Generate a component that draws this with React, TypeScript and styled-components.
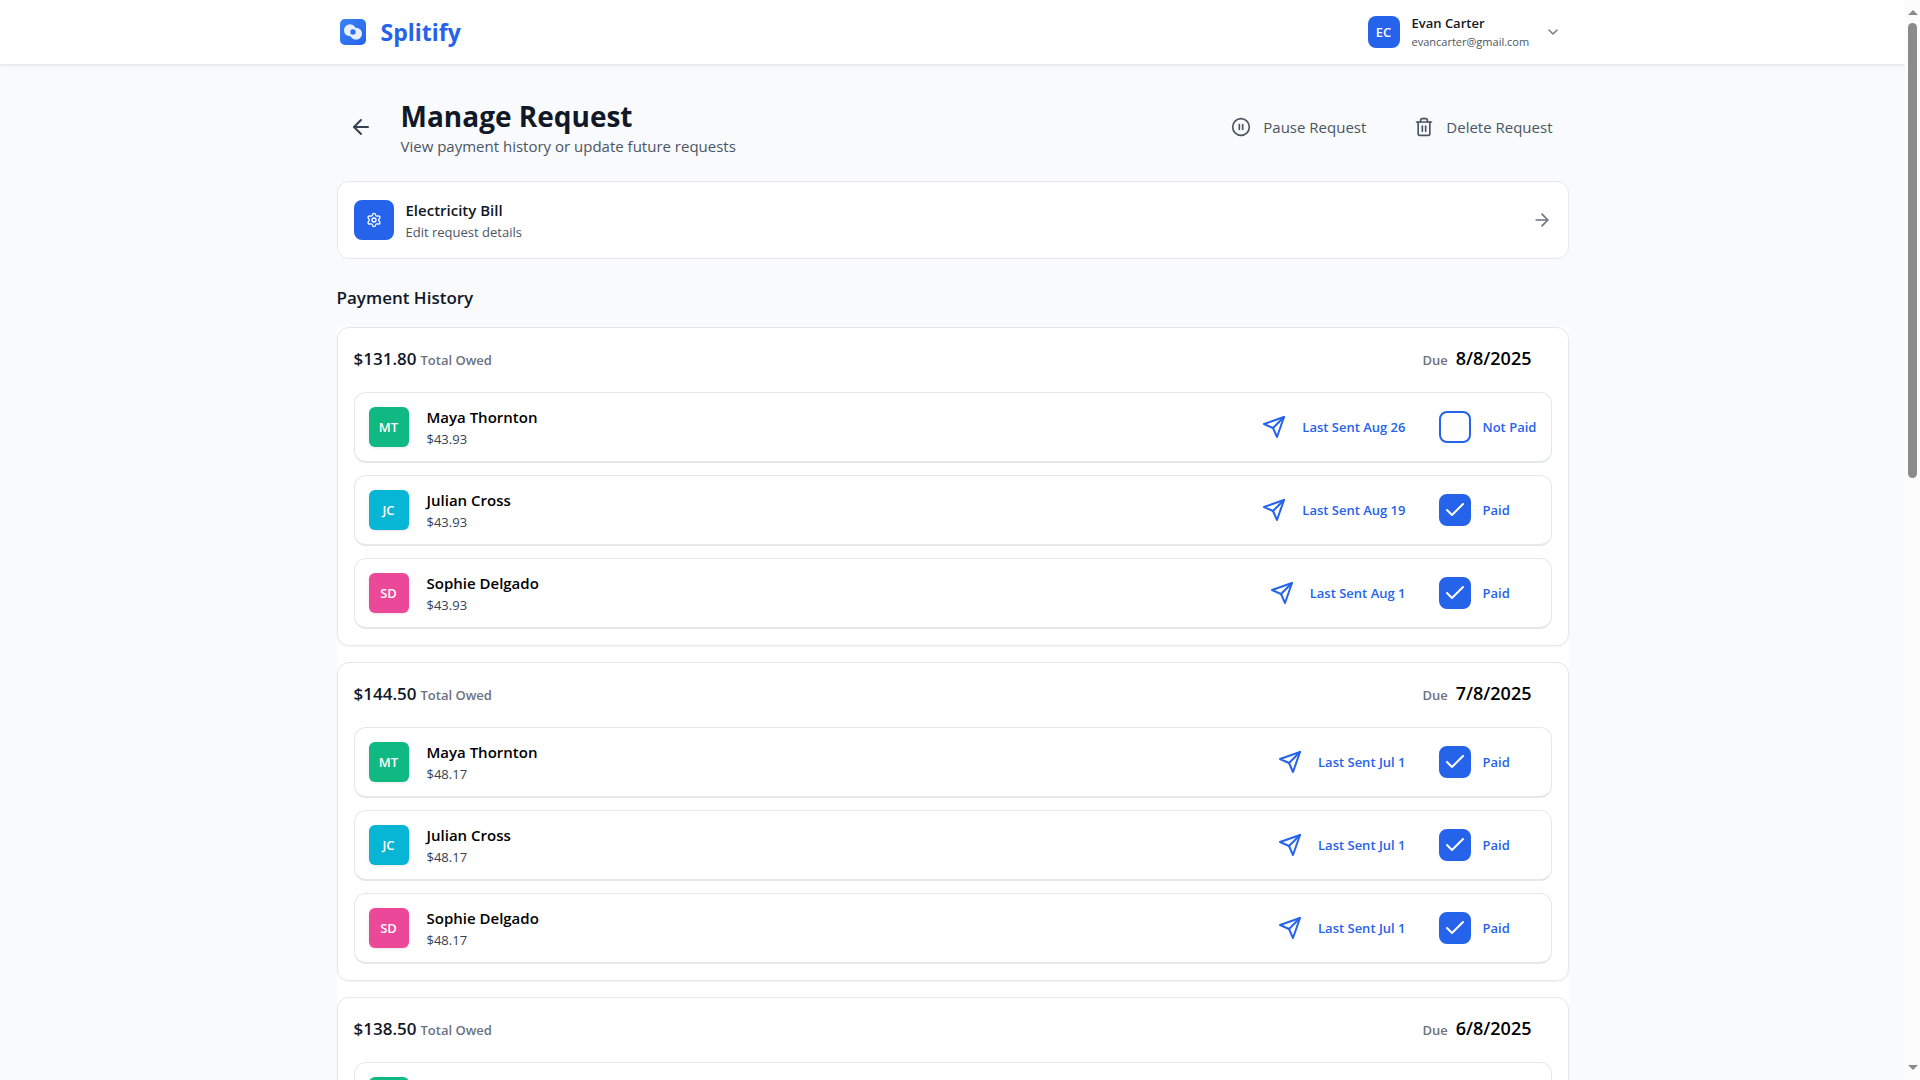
import React, { useState } from "react";
import styled, { createGlobalStyle } from "styled-components";
import {
  ArrowLeft,
  ArrowRight,
  Check,
  ChevronDown,
  CirclePause,
  Settings,
  Trash2,
} from "lucide-react";
import { FiSend } from "react-icons/fi";

const color = {
  page: "#f8fafc",
  surface: "#ffffff",
  line: "#e5e7eb",
  brand: "#2563eb",
  ink: "#111827",
  text: "#374151",
  muted: "#4b5563",
  faint: "#6b7280",
};

const GlobalStyle = createGlobalStyle`
  *, *::before, *::after { box-sizing: border-box; }
  html, body { margin: 0; }
  body {
    background: ${color.page};
    color: ${color.ink};
    font-family: "Segoe UI", "Open Sans", "Noto Sans", sans-serif;
    font-size: 15px;
    line-height: 24px;
  }
  h1, h2, p, ul { margin: 0; padding: 0; }
  ul { list-style: none; }
  button { border: 0; background: none; font: inherit; color: inherit; cursor: pointer; }
  a { color: inherit; text-decoration: none; }
`;

const Window = styled.div`
  display: flex;
  height: 100vh;
`;

const Viewport = styled.div`
  flex: 1;
  min-width: 0;
  overflow-y: auto;
  scrollbar-width: none;
`;

const ScrollRail = styled.div`
  display: flex;
  flex-direction: column;
  align-items: center;
  justify-content: space-between;
  width: 15px;
  padding: 10px 0;
  background: #fcfcfc;
`;

const RailArrow = styled.span<{ $down?: boolean }>`
  border: 0 solid transparent;
  border-left-width: 5px;
  border-right-width: 5px;
  ${(p) => (p.$down ? "border-top: 5px solid #8b8b8b;" : "border-bottom: 5px solid #8b8b8b;")}
`;

const RailTrack = styled.div`
  flex: 1;
  width: 9px;
  margin: 8px 0;
`;

const RailThumb = styled.div`
  height: 44%;
  border-radius: 5px;
  background: #8b8b8b;
`;

const TopBar = styled.header`
  background: ${color.surface};
  box-shadow: 0 1px 3px rgba(15, 23, 42, 0.12);
`;

const Container = styled.div`
  max-width: 1280px;
  margin: 0 auto;
  padding: 0 24px;
`;

const TopBarInner = styled(Container)`
  display: flex;
  align-items: center;
  justify-content: space-between;
  height: 64px;
`;

const Brand = styled.a`
  display: flex;
  align-items: center;
  gap: 12px;
  color: ${color.brand};
  font-size: 23px;
  font-weight: 700;
  line-height: 32px;
`;

const UserMenu = styled.button`
  display: flex;
  align-items: center;
  gap: 12px;
  padding: 8px;
  text-align: left;
`;

const Avatar = styled.span<{ $tone: string; $small?: boolean }>`
  display: flex;
  flex: none;
  align-items: center;
  justify-content: center;
  width: ${(p) => (p.$small ? 32 : 40)}px;
  height: ${(p) => (p.$small ? 32 : 40)}px;
  border-radius: ${(p) => (p.$small ? 8 : 6)}px;
  background: ${(p) => p.$tone};
  box-shadow: ${(p) => (p.$small ? "none" : "0 1px 3px rgba(0, 0, 0, 0.1)")};
  color: #ffffff;
  font-size: 13px;
  font-weight: 600;
`;

const UserText = styled.span`
  display: flex;
  flex-direction: column;
  min-width: 121px;
`;

const UserName = styled.span`
  font-size: 13px;
  font-weight: 600;
  line-height: 20px;
`;

const UserMail = styled.span`
  color: ${color.muted};
  font-size: 11px;
  line-height: 18px;
`;

const Chevron = styled(ChevronDown)`
  color: ${color.faint};
`;

const Main = styled.main`
  padding: 33px 0;
`;

const PageHead = styled.div`
  display: flex;
  align-items: center;
  justify-content: space-between;
  margin-bottom: 24px;
`;

const HeadLeft = styled.div`
  display: flex;
  align-items: center;
  gap: 16px;
`;

const BackButton = styled.button`
  display: flex;
  padding: 12px;
  color: ${color.text};
`;

const Title = styled.h1`
  font-size: 28px;
  font-weight: 700;
  line-height: 38px;
`;

const Subtitle = styled.p`
  color: ${color.muted};
  line-height: 22px;
`;

const HeadActions = styled.div`
  display: flex;
  gap: 16px;
`;

const ActionButton = styled.button`
  display: flex;
  align-items: center;
  gap: 12px;
  padding: 12px 16px;
  color: ${color.muted};
`;

const EditCard = styled.a`
  display: flex;
  align-items: center;
  gap: 12px;
  padding: 16px;
  border: 1px solid ${color.line};
  border-radius: 12px;
  background: ${color.surface};
`;

const EditIcon = styled.span`
  display: flex;
  align-items: center;
  justify-content: center;
  width: 40px;
  height: 40px;
  border-radius: 8px;
  background: ${color.brand};
  color: #ffffff;
`;

const EditText = styled.span`
  display: flex;
  flex: 1;
  flex-direction: column;
`;

const StrongLine = styled.span`
  font-weight: 600;
  line-height: 24px;
`;

const SmallLine = styled.span`
  color: ${color.muted};
  font-size: 13px;
  line-height: 20px;
`;

const EditArrow = styled(ArrowRight)`
  color: ${color.faint};
`;

const SectionTitle = styled.h2`
  margin: 24px 0 14px;
  font-size: 17px;
  font-weight: 600;
  line-height: 30px;
`;

const History = styled.div`
  display: flex;
  flex-direction: column;
  gap: 16px;
  background: ${color.surface};
`;

const PeriodCard = styled.section`
  padding: 16px;
  border: 1px solid ${color.line};
  border-radius: 12px;
  background: ${color.surface};
  box-shadow: 0 1px 2px rgba(0, 0, 0, 0.05);
`;

const PeriodHead = styled.div`
  display: flex;
  align-items: baseline;
  justify-content: space-between;
  height: 28px;
  margin-bottom: 20px;
  padding-right: 20px;
  line-height: 28px;
`;

const HeadPair = styled.div<{ $gap: number }>`
  display: flex;
  align-items: baseline;
  gap: ${(p) => p.$gap}px;
`;

const Amount = styled.span`
  font-size: 17px;
  font-weight: 600;
`;

const DueDate = styled.span`
  color: #000000;
  font-size: 18px;
  font-weight: 600;
`;

const Caption = styled.span`
  color: ${color.faint};
  font-size: 13px;
  font-weight: 600;
`;

const Rows = styled.ul`
  display: flex;
  flex-direction: column;
  gap: 12px;
`;

const Row = styled.li`
  display: flex;
  align-items: center;
  padding: 14px;
  border: 1px solid ${color.line};
  border-bottom-width: 2px;
  border-radius: 12px;
`;

const Person = styled.div`
  display: flex;
  flex: 1;
  flex-direction: column;
  height: 40px;
  margin-left: 18px;
  justify-content: center;
`;

const PersonName = styled.span`
  color: #000000;
  font-weight: 600;
  line-height: 24px;
`;

const PersonAmount = styled.span`
  color: ${color.text};
  font-size: 13px;
  line-height: 20px;
`;

const SendButton = styled.button`
  display: flex;
  align-items: center;
  gap: 16px;
  margin-right: 33px;
  padding: 0;
  color: ${color.brand};
  font-size: 13px;
  font-weight: 600;
`;

const PaidToggle = styled.label`
  display: grid;
  grid-template-columns: 32px 54px;
  column-gap: 12px;
  align-items: center;
  color: ${color.brand};
  font-size: 13px;
  font-weight: 600;
  white-space: nowrap;
  cursor: pointer;
`;

const Box = styled.span`
  display: grid;
  place-items: center;
  color: #ffffff;

  > * {
    grid-area: 1 / 1;
  }

  > svg {
    pointer-events: none;
  }
`;

const BoxInput = styled.input`
  appearance: none;
  width: 32px;
  height: 32px;
  margin: 0;
  border: 2px solid ${color.brand};
  border-radius: 8px;
  background: #ffffff;
  cursor: pointer;

  &:checked {
    background: ${color.brand};
  }
`;

type Member = { name: string; initials: string; tone: string };

const members: Member[] = [
  { name: "Maya Thornton", initials: "MT", tone: "#10b981" },
  { name: "Julian Cross", initials: "JC", tone: "#06b6d4" },
  { name: "Sophie Delgado", initials: "SD", tone: "#ec4899" },
];

const periods = [
  {
    total: "$131.80",
    due: "8/8/2025",
    share: "$43.93",
    sent: ["Aug 26", "Aug 19", "Aug 1"],
    paid: [false, true, true],
  },
  {
    total: "$144.50",
    due: "7/8/2025",
    share: "$48.17",
    sent: ["Jul 1", "Jul 1", "Jul 1"],
    paid: [true, true, true],
  },
  {
    total: "$138.50",
    due: "6/8/2025",
    share: "$46.17",
    sent: ["Jun 1", "Jun 1", "Jun 1"],
    paid: [true, true, true],
  },
];

function LogoMark() {
  return (
    <svg width="32" height="32" viewBox="0 0 32 32" aria-hidden="true">
      <defs>
        <linearGradient id="logo-fill" x1="0" y1="0" x2="1" y2="1">
          <stop offset="0" stopColor="#3b82f6" />
          <stop offset="1" stopColor="#2563eb" />
        </linearGradient>
      </defs>
      <rect x="3" y="3" width="26" height="26" rx="5" fill="url(#logo-fill)" />
      <g fill="#e8effd">
        <circle cx="13" cy="14.3" r="6" />
        <circle cx="19" cy="17.7" r="6" />
      </g>
      <circle cx="16" cy="16" r="2.7" fill="#2f6ff0" />
    </svg>
  );
}

function PaymentRow({
  member,
  share,
  sent,
  initiallyPaid,
}: {
  member: Member;
  share: string;
  sent: string;
  initiallyPaid: boolean;
}) {
  const [paid, setPaid] = useState(initiallyPaid);
  return (
    <Row>
      <Avatar $tone={member.tone}>{member.initials}</Avatar>
      <Person>
        <PersonName>{member.name}</PersonName>
        <PersonAmount>{share}</PersonAmount>
      </Person>
      <SendButton type="button">
        <FiSend size={24} />
        Last Sent {sent}
      </SendButton>
      <PaidToggle>
        <Box>
          <BoxInput type="checkbox" checked={paid} onChange={() => setPaid(!paid)} />
          {paid && <Check size={24} strokeWidth={2} />}
        </Box>
        {paid ? "Paid" : "Not Paid"}
      </PaidToggle>
    </Row>
  );
}

export default function App() {
  return (
    <Window>
      <GlobalStyle />
      <Viewport>
        <TopBar>
          <TopBarInner>
            <Brand href="#">
              <LogoMark />
              Splitify
            </Brand>
            <UserMenu type="button">
              <Avatar $tone={color.brand} $small>
                EC
              </Avatar>
              <UserText>
                <UserName>Evan Carter</UserName>
                <UserMail>evancarter@gmail.com</UserMail>
              </UserText>
              <Chevron size={16} />
            </UserMenu>
          </TopBarInner>
        </TopBar>
        <Main>
          <Container>
            <PageHead>
              <HeadLeft>
                <BackButton type="button" aria-label="Back">
                  <ArrowLeft size={24} />
                </BackButton>
                <div>
                  <Title>Manage Request</Title>
                  <Subtitle>View payment history or update future requests</Subtitle>
                </div>
              </HeadLeft>
              <HeadActions>
                <ActionButton type="button">
                  <CirclePause size={20} />
                  Pause Request
                </ActionButton>
                <ActionButton type="button">
                  <Trash2 size={20} />
                  Delete Request
                </ActionButton>
              </HeadActions>
            </PageHead>
            <EditCard href="#">
              <EditIcon>
                <Settings size={16} />
              </EditIcon>
              <EditText>
                <StrongLine>Electricity Bill</StrongLine>
                <SmallLine>Edit request details</SmallLine>
              </EditText>
              <EditArrow size={20} />
            </EditCard>
            <SectionTitle>Payment History</SectionTitle>
            <History>
              {periods.map((period) => (
                <PeriodCard key={period.due}>
                  <PeriodHead>
                    <HeadPair $gap={4}>
                      <Amount>{period.total}</Amount>
                      <Caption>Total Owed</Caption>
                    </HeadPair>
                    <HeadPair $gap={8}>
                      <Caption>Due</Caption>
                      <DueDate>{period.due}</DueDate>
                    </HeadPair>
                  </PeriodHead>
                  <Rows>
                    {members.map((member, i) => (
                      <PaymentRow
                        key={member.name}
                        member={member}
                        share={period.share}
                        sent={period.sent[i]}
                        initiallyPaid={period.paid[i]}
                      />
                    ))}
                  </Rows>
                </PeriodCard>
              ))}
            </History>
          </Container>
        </Main>
      </Viewport>
      <ScrollRail aria-hidden="true">
        <RailArrow />
        <RailTrack>
          <RailThumb />
        </RailTrack>
        <RailArrow $down />
      </ScrollRail>
    </Window>
  );
}
